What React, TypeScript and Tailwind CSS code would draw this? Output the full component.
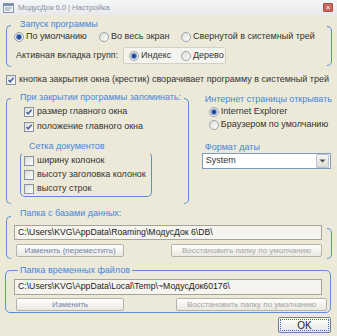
import clsx from "clsx";

const Bracket = ({ right, className }: { right?: boolean; className?: string }) => (
  <div
    className={clsx(
      "w-[5px] shrink-0 border-y border-[#5a8fd8]",
      right ? "border-r rounded-r-[5px]" : "border-l rounded-l-[5px]",
      className
    )}
  />
);

const Radio = ({ checked }: { checked?: boolean }) => (
  <span className="w-[10px] h-[10px] shrink-0 rounded-full border border-[#9da3ab] bg-gradient-to-br from-[#dcdcd6] to-white flex items-center justify-center">
    {checked && <span className="w-[4px] h-[4px] rounded-full bg-[#21448f] ring-1 ring-[#6f8fd0]" />}
  </span>
);

const Check = ({ checked }: { checked?: boolean }) => (
  <span className="w-[10px] h-[10px] shrink-0 border border-[#8a93a6] bg-gradient-to-br from-[#dcdcd6] to-white flex items-center justify-center">
    {checked && (
      <svg width="8" height="8" viewBox="0 0 8 8">
        <path d="M1.5 4 L3.2 5.8 L6.6 1.8" fill="none" stroke="#4a5fa8" strokeWidth="1.6" />
      </svg>
    )}
  </span>
);

const Label = ({ children, className }: { children: React.ReactNode; className?: string }) => (
  <div className={clsx("h-[11px] leading-[11px] text-[#4486dc] whitespace-nowrap", className)}>{children}</div>
);

const Button = ({ children, className, blue }: { children: React.ReactNode; className?: string; blue?: boolean }) => (
  <div
    className={clsx(
      "h-[13px] flex items-center justify-center rounded-[2px] border border-[#b5b3a8] bg-gradient-to-b from-white to-[#e9e8e1] whitespace-nowrap text-[8px]",
      blue ? "text-[#7282a8]" : "text-[#a4a4a0]",
      className
    )}
  >
    {children}
  </div>
);

export default function App() {
  return (
    <div className="w-[337px] h-[336px] overflow-hidden bg-[#ece9d8] text-[9px] text-[#333] font-['Liberation_Sans',Arial,sans-serif]">
      {/* Title bar */}
      <div className="h-[15px] flex items-center px-[3px] bg-gradient-to-b from-[#f5f6f7] to-[#e8e9ec]">
        <svg width="11" height="10" viewBox="0 0 11 10" className="shrink-0">
          <rect x="0.5" y="0.5" width="10" height="9" fill="#eef1f6" stroke="#8a96ab" />
          <rect x="1" y="1" width="9" height="2" fill="#7d8fb0" />
          <path d="M2 5h7M2 7h5" stroke="#8a96ab" />
        </svg>
        <span className="ml-[4px] text-[8px] tracking-[-0.2px] text-[#8c94a4] whitespace-nowrap">МодусДок 6.0 | Настройка</span>
        <span className="ml-auto mr-[1px] w-[10px] h-[9px] rounded-[1px] bg-[#c9675e] border border-[#b04d45] flex items-center justify-center text-white text-[8px] leading-none">
          ×
        </span>
      </div>

      <div className="pl-[6px] pr-[5px] flex flex-col">
        {/* Запуск программы */}
        <div className="mt-[4px] flex h-[48px]">
          <Bracket className="mt-[6px]" />
          <div className="flex-1 pl-[3px]">
            <Label className="ml-[6px]">Запуск программы</Label>
            <div className="h-[13px] flex items-center">
              <div className="w-[85px] flex items-center gap-[2px]">
                <Radio checked />
                <span>По умолчанию</span>
              </div>
              <div className="w-[82px] flex items-center gap-[2px]">
                <Radio />
                <span>Во весь экран</span>
              </div>
              <div className="flex items-center gap-[2px]">
                <Radio />
                <span className="whitespace-nowrap">Свернутой в системный трей</span>
              </div>
            </div>
            <div className="mt-[4px] h-[17px] flex items-center">
              <span className="ml-[2px] w-[107px] whitespace-nowrap">Активная вкладка групп:</span>
              <div className="w-[103px] h-[17px] flex items-center pl-[5px] rounded-[2px] border border-[#d3d1c6] bg-[#f4f3ee]">
                <div className="w-[52px] flex items-center gap-[2px]">
                  <Radio checked />
                  <span>Индекс</span>
                </div>
                <div className="flex items-center gap-[2px]">
                  <Radio />
                  <span>Дерево</span>
                </div>
              </div>
            </div>
          </div>
          <Bracket right className="mt-[7px] mb-[1px]" />
        </div>

        <div className="mt-[7px] h-[12px] flex items-center gap-[3px]">
          <Check checked />
          <span className="whitespace-nowrap">кнопка закрытия окна (крестик) сворачивает программу в системный трей</span>
        </div>

        {/* При закрытии программы */}
        <div className="mt-[6px] flex h-[112px]">
          <Bracket className="mt-[6px]" />
          <div className="w-[173px]">
            <Label className="ml-[9px]">При закрытии программы запоминать:</Label>
            <div className="mt-[3px] ml-[13px] h-[12px] flex items-center gap-[3px]">
              <Check checked />
              <span>размер главного окна</span>
            </div>
            <div className="mt-[3px] ml-[13px] h-[12px] flex items-center gap-[3px]">
              <Check checked />
              <span>положение главного окна</span>
            </div>
            <Label className="mt-[8px] ml-[18px]">Сетка документов</Label>
            <div className="ml-[9px] w-[132px] h-[45px] pt-[1px] pl-[3px] rounded-[5px] border border-[#5a8fd8] border-t-transparent">
              {["ширину колонок", "высоту заголовка колонок", "высоту строк"].map((t) => (
                <div key={t} className="h-[14px] flex items-center gap-[3px]">
                  <Check />
                  <span className="whitespace-nowrap">{t}</span>
                </div>
              ))}
            </div>
          </div>
          <Bracket right className="mt-[6px]" />
          <div className="flex-1 pl-[13px]">
            <Label className="mt-[2px] ml-[3px]">Интернет страницы открывать</Label>
            <div className="mt-[1px] ml-[7px] h-[12px] flex items-center gap-[2px]">
              <Radio checked />
              <span>Internet Explorer</span>
            </div>
            <div className="mt-[1px] ml-[7px] h-[12px] flex items-center gap-[2px]">
              <Radio />
              <span className="whitespace-nowrap">Браузером по умолчанию</span>
            </div>
            <Label className="mt-[11px] ml-[3px]">Формат даты</Label>
            <div className="w-[129px] h-[16px] flex items-center border border-[#7f9db9] bg-white">
              <span className="pl-[3px] flex-1">System</span>
              <div className="w-[13px] h-[14px] mr-[1px] flex items-center justify-center rounded-[1px] border border-[#b9c2cf] bg-gradient-to-b from-[#f6f6f4] to-[#dedcd4]">
                <svg width="7" height="4" viewBox="0 0 7 4">
                  <path d="M0.5 0.5h6L3.5 3.5z" fill="#4d4d4d" />
                </svg>
              </div>
            </div>
          </div>
        </div>

        {/* Папка с базами данных */}
        <div className="mt-[4px] flex h-[51px]">
          <Bracket className="mt-[8px]" />
          <div className="flex-1">
            <Label className="ml-[9px]">Папка с базами данных:</Label>
            <div className="mt-[6px] ml-[3px] mr-[5px] h-[15px] flex items-center pl-[3px] border border-[#a5a49c] bg-[#f5f4ef] whitespace-nowrap text-[8.7px] text-[#222]">
              C:\Users\KVG\AppData\Roaming\МодусДок 6\DB\
            </div>
            <div className="mt-[4px] flex">
              <Button blue className="ml-[5px] w-[108px]">
                Изменить (переместить)
              </Button>
              <Button className="ml-auto mr-[5px] w-[151px]">Восстановить папку по умолчанию</Button>
            </div>
          </div>
          <Bracket right className="mt-[20px]" />
        </div>

        {/* Папка временных файлов */}
        <fieldset className="mt-[6px] -ml-[1px] w-[326px] h-[48px] rounded-[5px] border border-[#5a8fd8]">
          <legend className="ml-[12px] px-[2px] h-[11px] leading-[11px] text-[#4486dc]">Папка временных файлов</legend>
          <div className="mt-[3px] ml-[8px] w-[308px] h-[16px] flex items-center pl-[3px] border border-[#a5a49c] bg-[#f5f4ef] whitespace-nowrap text-[8.7px] text-[#222]">
            C:\Users\KVG\AppData\Local\Temp\~МодусДок60176\
          </div>
          <div className="mt-[3px] flex">
            <Button blue className="ml-[10px] w-[108px]">
              Изменить
            </Button>
            <Button className="ml-auto mr-[3px] w-[151px]">Восстановить папку по умолчанию</Button>
          </div>
        </fieldset>

        <div className="mt-[4px] mr-[1px] self-end w-[53px] h-[16px] p-[1px] rounded-[2px] border border-[#6f7f98] bg-gradient-to-b from-white to-[#e6e5de]">
          <div className="w-full h-full flex items-center justify-center border border-dotted border-[#4a6cc0] text-[10px] text-[#222]">
            OK
          </div>
        </div>
      </div>
    </div>
  );
}
